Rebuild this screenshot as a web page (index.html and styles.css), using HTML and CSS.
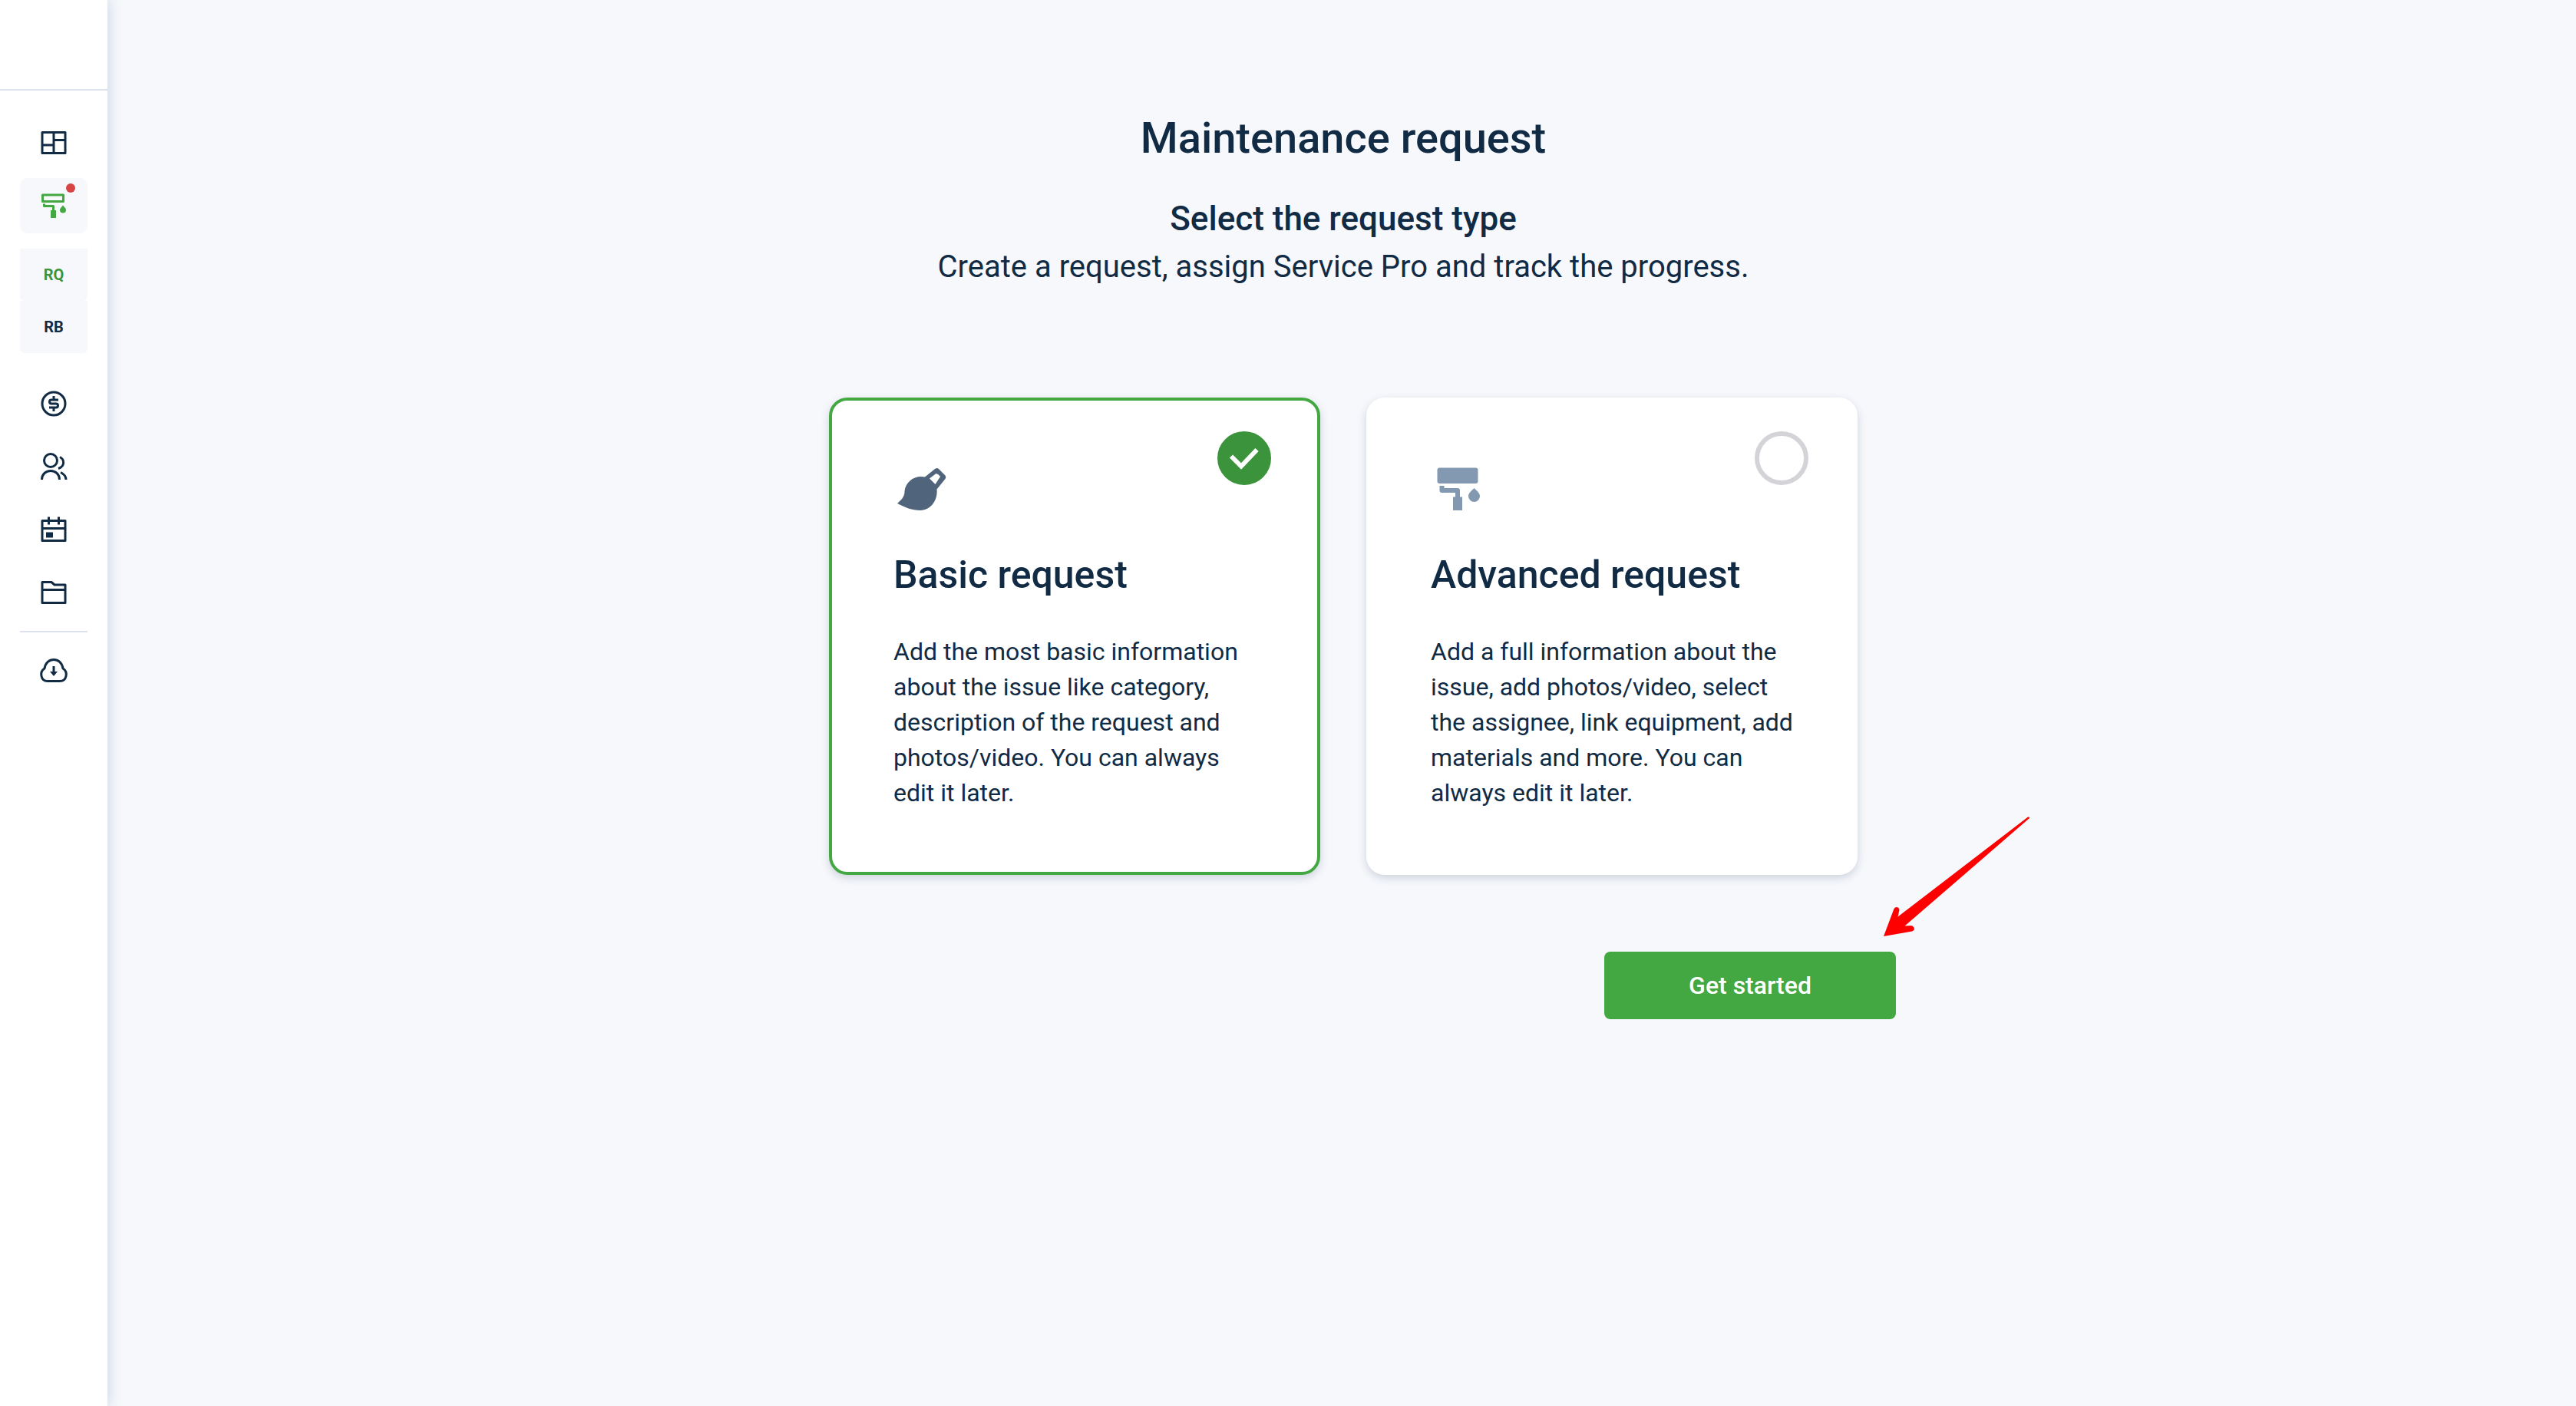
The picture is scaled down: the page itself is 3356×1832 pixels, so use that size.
FILE: index.html
```html
<!DOCTYPE html>
<html lang="en">
	<head>
		<meta charset="UTF-8">
		<title>Maintenance request</title>
		<link rel="stylesheet" href="styles.css">
	</head>
	<body>
		<aside class="sidebar">
			<div class="logo"></div>
			<nav class="menu">
				<a class="item" href="#" aria-label="Dashboard">
					<svg viewBox="0 0 40 40"><path d="M5 6.5h30v27H5zM20 6.5v27M5 23h15M20 16.5h15"/></svg>
				</a>
				<a class="item active" href="#" aria-label="Maintenance">
					<svg viewBox="0 0 40 40">
						<path d="M5.5 6h27v8.500h-27zM7.500 17.500v3h12v6"/>
						<path class="fill" d="M16 26h7v10h-7zM32 19.500c2 2.500 4 4 4 6a4 4 0 0 1-8 0c0-2 2-3.500 4-6z"/>
					</svg>
					<span class="dot"></span>
				</a>
				<div class="submenu">
					<a class="sub current" href="#">RQ</a>
					<a class="sub" href="#">RB</a>
				</div>
				<a class="item" href="#" aria-label="Accounting">
					<svg viewBox="0 0 40 40"><circle cx="20" cy="20" r="15"/><path d="M26 15h-9a2.500 2.500 0 0 0 0 5h6a2.500 2.500 0 0 1 0 5h-9M20 10v5M20 25v5"/></svg>
				</a>
				<a class="item" href="#" aria-label="Contacts">
					<svg viewBox="0 0 40 40"><circle cx="16" cy="12" r="8.500"/><path d="M4.500 37c0-7 5-11.500 11.500-11.500S27.500 30 27.500 37M28 7.500c6 3 7 12-2 15M29 27.500c4 2 7 5.500 7 9.500"/></svg>
				</a>
				<a class="item" href="#" aria-label="Calendar">
					<svg viewBox="0 0 40 40"><path d="M5 8.500h30v26H5zM5 18.500h30M13.500 3.500v10M26.500 3.500v10"/><path class="fill" d="M10 23.500h9v7h-9z"/></svg>
				</a>
				<a class="item" href="#" aria-label="Documents">
					<svg viewBox="0 0 40 40"><path d="M5 33.500V6.500h12l4 3.500h14v23.500zM5 16.500h30"/></svg>
				</a>
				<hr class="line">
				<a class="item" href="#" aria-label="Downloads">
					<svg viewBox="0 0 40 40"><path d="M12 34.500h16c9 0 11-12 4-16.500C30 2.500 10 2.500 8 18c-7 4.500-5 16.500 4 16.500zM20 15v9"/><path class="fill" d="M15 22h10l-5 6z"/></svg>
				</a>
			</nav>
		</aside>
		<main class="main">
			<h1 class="title">Maintenance request</h1>
			<h2 class="subtitle">Select the request type</h2>
			<p class="lead">Create a request, assign Service Pro and track the progress.</p>
			<form class="form">
				<div class="cards">
					<label class="card">
						<input class="radio" type="radio" name="type" value="basic" checked>
						<svg class="check" viewBox="0 0 70 70"><path d="M18 32.500l13 13L51.500 24"/></svg>
						<svg class="pic brush" viewBox="14 14 80 72">
							<path d="M19 66C26 60 28.500 56 28.500 50 29.500 39 39 31 50 31l5 .5L68 21Q71 19 73 21l8.500 8.500Q83 32 81.500 34L70.500 47.500C72 61 63 75 49 75 38 75 29 71 19 66z"/>
							<path class="hole" d="M61 33.500l8.500-6.500q3 .5 5.500 4l-6.500 10z"/>
						</svg>
						<span class="name">Basic request</span>
						<span class="text">Add the most basic information about the issue like category, description of the request and photos/video. You can always edit it later.</span>
					</label>
					<label class="card">
						<input class="radio" type="radio" name="type" value="advanced">
						<svg class="check" viewBox="0 0 70 70"><path d="M18 32.500l13 13L51.500 24"/></svg>
						<svg class="pic roller" viewBox="14 14 80 72">
							<rect x="22.500" y="19.500" width="53" height="20.500" rx="3"/>
							<path d="M25.500 43h6v3H49q3 0 3 3v8.500h3V75H43V57.500h3V52H28.500q-3 0-3-3z"/>
							<path d="M70.500 46c4 4 7.500 6.500 7.500 10.500a7.500 7.500 0 0 1-15 0c0-4 3.500-6.500 7.500-10.500z"/>
						</svg>
						<span class="name">Advanced request</span>
						<span class="text">Add a full information about the issue, add photos/video, select the assignee, link equipment, add materials and more. You can always edit it later.</span>
					</label>
				</div>
				<div class="actions">
					<button class="btn" type="button">Get started</button>
					<svg class="arrow" viewBox="0 0 192 158"><path d="M1 157L14.500 121Q17 117.500 20.500 120 22 122 21 125L19.500 131.500 189 1.500Q191.500 1 191 3L28.500 143.500 37 143Q42 145 40.500 149L38 150.500z"/></svg>
				</div>
			</form>
		</main>
	</body>
</html>
```
FILE: styles.css
```css
*{
	box-sizing: border-box;
}
body{
	margin: 0;
	display: flex;
	min-height: 100vh;
	background: #f7f8fc;
	color: #112b45;
	font-family: Roboto, "Liberation Sans", sans-serif;
}
.sidebar{
	width: 140px;
	flex: none;
	background: #fff;
	box-shadow: 0 0 18px #c0cfde;
}
.logo{
	height: 118px;
	border-bottom: 2px solid #dbe2ec;
}
.menu{
	display: flex;
	flex-direction: column;
	gap: 10px;
	padding: 32px 26px;
}
.item{
	position: relative;
	display: flex;
	align-items: center;
	justify-content: center;
	height: 72px;
	border-radius: 10px;
	color: #112b45;
}
.item svg{
	width: 40px;
	height: 40px;
	fill: none;
	stroke: currentColor;
	stroke-width: 3;
	stroke-linejoin: round;
}
.item .fill{
	fill: currentColor;
	stroke: none;
}
.active{
	background: #f7f8fc;
	color: #43a842;
}
.dot{
	position: absolute;
	top: 7px;
	right: 16px;
	width: 12px;
	height: 12px;
	border-radius: 50%;
	background: #d84545;
}
.submenu{
	margin: 10px 0 20px;
}
.sub{
	display: block;
	height: 68px;
	line-height: 68px;
	border-radius: 0 0 6px 6px;
	background: #f7f8fc;
	color: #112b45;
	font-size: 20px;
	font-weight: 700;
	text-align: center;
	text-decoration: none;
}
.current{
	color: #3b943b;
}
.line{
	width: 100%;
	height: 2px;
	margin: 4px 0 3px;
	border: 0;
	background: #dbe2ec;
}
.main{
	flex: 1;
	margin-left: 4px;
	padding: 148px 40px 40px;
	text-align: center;
}
.title{
	margin: 0 0 48px;
	font-size: 56px;
	line-height: 64px;
	font-weight: 500;
}
.subtitle{
	margin: 0 0 14px;
	font-size: 44px;
	line-height: 50px;
	font-weight: 500;
}
.lead{
	margin: 0;
	font-size: 40px;
	line-height: 48px;
}
.form{
	max-width: 1440px;
	margin: 146px auto 0;
}
.cards{
	display: flex;
	justify-content: center;
	gap: 60px;
}
.card{
	position: relative;
	display: flex;
	flex-direction: column;
	width: 640px;
	padding: 82px 80px 80px;
	border: 4px solid #fff;
	border-radius: 24px;
	background: #fff;
	box-shadow: 0 4px 12px #ccd3dc;
	text-align: left;
}
.card:has(.radio:checked){
	border-color: #43a842;
}
.radio,
.check{
	position: absolute;
	top: 40px;
	right: 60px;
	width: 70px;
	height: 70px;
	margin: 0;
}
.radio{
	appearance: none;
	border: 6px solid #d4d4d8;
	border-radius: 50%;
}
.radio:checked{
	border-color: #3b943b;
	background: #3b943b;
}
.check{
	display: none;
	fill: none;
	stroke: #fff;
	stroke-width: 6;
}
.radio:checked + .check{
	display: block;
}
.pic{
	width: 80px;
	height: 72px;
	margin-bottom: 45px;
}
.brush{
	fill: #50657c;
}
.hole{
	fill: #fff;
}
.roller{
	fill: #8299b1;
}
.name{
	margin-bottom: 49px;
	font-size: 50px;
	line-height: 56px;
	font-weight: 500;
}
.text{
	font-size: 32px;
	line-height: 46px;
}
.actions{
	position: relative;
	display: flex;
	justify-content: flex-end;
	margin-top: 100px;
}
.btn{
	width: 380px;
	height: 88px;
	border: 0;
	border-radius: 8px;
	background: #43a842;
	color: #fff;
	font: 500 32px Roboto, "Liberation Sans", sans-serif;
}
/* pointer over the button's corner */
.arrow{
	position: absolute;
	right: -175px;
	bottom: 107px;
	width: 192px;
	height: 158px;
	fill: #f00;
}
```
